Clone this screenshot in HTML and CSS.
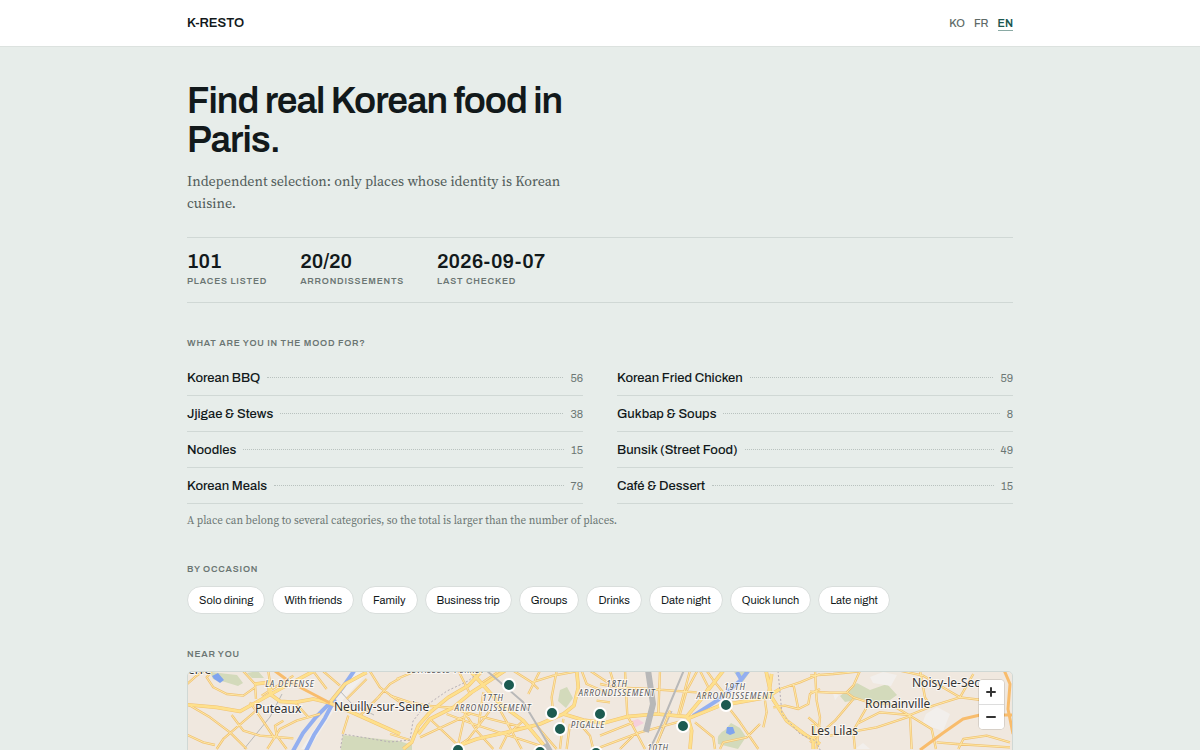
FILE: index.html
```html
<!DOCTYPE html>
<html lang="en">
<head>
<meta charset="utf-8">
<meta name="viewport" content="width=device-width, initial-scale=1">
<title>K-RESTO</title>
<link rel="stylesheet" href="styles.css">
</head>
<body>
<header class="site-header">
  <div class="wrap header-row">
    <a class="brand" href="#">K-RESTO</a>
    <nav class="langs" aria-label="Language">
      <a href="#ko">KO</a>
      <a href="#fr">FR</a>
      <a href="#en" class="active" aria-current="page">EN</a>
    </nav>
  </div>
</header>
<main class="wrap">
  <section class="hero">
    <h1>Find real Korean food in Paris.</h1>
    <p>Independent selection: only places whose identity is Korean cuisine.</p>
  </section>
  <dl class="stats">
    <div><dd>101</dd><dt>PLACES LISTED</dt></div>
    <div><dd>20/20</dd><dt>ARRONDISSEMENTS</dt></div>
    <div><dd>2026-09-07</dd><dt>LAST CHECKED</dt></div>
  </dl>
  <section class="block">
    <h2>WHAT ARE YOU IN THE MOOD FOR?</h2>
    <div class="menu">
      <a href="#bbq"><span>Korean BBQ</span><i></i><b>56</b></a>
      <a href="#chicken"><span>Korean Fried Chicken</span><i></i><b>59</b></a>
      <a href="#stews"><span>Jjigae &amp; Stews</span><i></i><b>38</b></a>
      <a href="#soups"><span>Gukbap &amp; Soups</span><i></i><b>8</b></a>
      <a href="#noodles"><span>Noodles</span><i></i><b>15</b></a>
      <a href="#bunsik"><span>Bunsik (Street Food)</span><i></i><b>49</b></a>
      <a href="#meals"><span>Korean Meals</span><i></i><b>79</b></a>
      <a href="#cafe"><span>Café &amp; Dessert</span><i></i><b>15</b></a>
    </div>
    <p class="note">A place can belong to several categories, so the total is larger than the number of places.</p>
  </section>
  <section class="block">
    <h2>BY OCCASION</h2>
    <div class="chips">
      <a href="#solo">Solo dining</a>
      <a href="#friends">With friends</a>
      <a href="#family">Family</a>
      <a href="#business">Business trip</a>
      <a href="#groups">Groups</a>
      <a href="#drinks">Drinks</a>
      <a href="#date">Date night</a>
      <a href="#lunch">Quick lunch</a>
      <a href="#late">Late night</a>
    </div>
  </section>
  <section class="block">
    <h2>NEAR YOU</h2>
    <div class="map">
      <svg class="map-art" viewBox="188 673 824 320" preserveAspectRatio="xMidYMin slice" role="img" aria-label="Map of Korean restaurants in Paris">
        <defs>
          <g id="minor">
            <g transform="translate(180 640) scale(.3333)">
              <path d="M22 135 L50 110 L70 97 M95 97 L80 115 L100 145 L140 165 L190 170 L225 145 M190 97 L225 135 L228 180 M110 330 L130 300 L240 205 M22 288 L70 310 L105 318 M155 228 L190 275 L240 290 L340 298 M262 330 L300 270 L350 245 L420 225 M320 330 L290 290 L285 260 L310 245 M210 190 L245 240 L285 300 M430 97 L480 140 M400 97 L440 150 M500 180 L560 120 M590 180 L630 135 L660 118 M570 97 L600 145 L660 190 M488 285 L505 230 M265 97 L275 165 M22 195 L90 235 L150 280 L200 330 M345 190 L385 235 M245 170 L340 110 M540 230 L600 170"/>
            </g>
            <g transform="translate(390 665) scale(.3333)">
              <path d="M370 20 L425 55 L445 75 M425 55 L490 35 L560 22 M500 20 L485 100 L490 150 M450 20 L415 90 M0 95 L60 115 L110 125 L190 132 M20 45 L80 20 M190 135 L300 165 L400 190 M220 140 L260 200 L310 255 M300 140 L235 225 L190 255 M320 120 L370 210 L395 255 M120 165 L205 245 M0 210 L60 228 M170 150 L250 180 L450 245 M520 165 L510 255 M540 180 L530 255 M565 175 L600 215 L610 255 M600 20 L660 60 M240 90 L205 20 M280 85 L265 190 M90 220 L240 150 M400 170 L350 215 L330 255 M440 185 L500 255 M620 110 L660 115 M575 20 L590 60 L660 90 M225 150 L205 240 M270 60 L330 20"/>
            </g>
            <g transform="translate(600 665) scale(.3333)">
              <path d="M0 60 L50 70 L150 75 L290 85 M180 20 L175 150 M75 20 L82 155 L135 255 M270 20 L235 150 M292 20 L260 80 L240 150 M0 250 L120 205 L250 170 M60 255 L100 215 M210 140 L165 255 M320 20 L345 55 L390 110 M385 130 L420 175 L475 255 M285 175 L340 220 L345 255 M495 110 L500 145 L490 190 M580 60 L595 135 L555 125 L520 130 M595 135 L625 120 L630 90 L660 75 M480 180 L440 220 L370 235 L360 255 M300 20 L325 70 L300 110 M625 160 L660 190 M540 75 L600 55 L660 30 M30 20 L45 70 M0 215 L100 175"/>
            </g>
            <g transform="translate(810 665) scale(.3333)">
              <path d="M0 35 L70 30 L150 22 M0 83 L60 86 L110 85 L130 65 L150 20 M15 20 L20 110 L30 160 L20 255 M130 105 L75 170 L0 235 M130 200 L170 130 L190 120 L130 100 L110 85 M60 215 L200 190 L300 157 M130 205 L135 255 M140 180 L210 145 L300 153 L370 125 L450 100 L515 108 M300 155 L365 195 L378 255 M300 155 L305 255 M300 155 L240 120 L190 115 M330 20 L345 100 L357 120 M450 100 L490 30 M450 100 L390 65 L340 35 L270 20 M445 255 L460 225 L530 215 L600 235 M380 235 L440 240 L600 250"/>
            </g>
          </g>
          <g id="major">
            <g transform="translate(180 640) scale(.3333)">
              <path d="M22 197 L110 205 L180 217 L225 192 L300 150 L400 97 M225 135 L265 130 L270 165 L300 187 L345 190 L400 180 L450 192 L520 222 L660 285 M450 190 L495 135 L560 100"/>
            </g>
            <g transform="translate(390 665) scale(.3333)">
              <path d="M275 22 L235 65 L175 100 L120 145 L85 185 L65 235 L40 255 M345 20 L245 85 L190 130 L120 165 L85 210 M205 245 L260 225 L350 205 L450 180 L520 150 L552 125 L565 70 L560 20 M520 150 L580 168 L630 175 M240 20 L290 75 L330 120 L400 170 L450 230 L470 255"/>
            </g>
            <g transform="translate(600 665) scale(.3333)">
              <path d="M0 180 L80 158 L170 150 L260 158 L300 110 L370 20 M260 165 L360 125 L500 100 L540 75 M265 165 L275 200 L270 255 M498 20 L515 100 L560 170 L620 215 L660 240 M515 30 L505 100 M640 180 L640 255"/>
            </g>
          </g>
        </defs>
        <rect class="land" x="188" y="673" width="824" height="320"/>
        <g class="green">
          <path d="M210 673 L237 676 L243 684 L238 687 L225 683 L213 680Z M247 674 L258 672 L264 679 L252 679Z"/>
          <path d="M343 736 L399 742 L412 746 V780 H336Z"/>
          <path d="M560 691 L567 688 L573 699 L566 709 L558 702Z"/>
          <path d="M718 745 Q716 735 725 731 L731 724 L740 729 L746 738 L738 750Z M734 673 H750 L742 684Z"/>
          <path d="M840 697 L857 684 L870 691 L887 685 L897 696 L883 706 L862 700 L845 703Z"/>
        </g>
        <g class="pale">
          <path d="M870 678 L883 673 L897 676 L891 687 L873 684Z M926 715 L937 708 L950 715 L943 732 L922 725Z M855 750 L863 744 L870 750Z M833 694 L839 696 L835 701Z"/>
          <path d="M354 673 H368 L334 711 L309 750 H301 L331 706Z"/>
        </g>
        <path class="pink" d="M631 722 L638 720 L644 724 L634 729Z"/>
        <g class="river">
          <path d="M354 672 L343 688 L330 704 L316 718 L303 734 L293 752"/>
          <path d="M335 700 L325 719 L314 736 L306 752"/>
          <path d="M693 717 L718 701 L741 681 L748 672 M737 673 L742 682"/>
        </g>
        <path class="water" d="M212 677 L218 674 L224 681 L220 684 L214 680Z M727 728 L733 728 L735 734 L730 736 L726 734Z"/>
        <path class="rail thin" d="M244 750 L270 718 L282 695 M340 692 L352 705 L374 716 M655 750 L672 712"/>
        <use href="#minor" class="casing"/>
        <use href="#major" class="casing wide"/>
        <use href="#minor" class="road"/>
        <use href="#major" class="road wide"/>
        <g class="motorway">
          <path d="M920 751 L943 734 L963 720 L980 716 H1012 M1004 671 L1010 685 L1008 710 L1013 735"/>
          <path d="M275 672 L290 683 L330 704"/>
        </g>
        <path class="rail" d="M486 671 L523 703 L537 726 L552 752"/>
        <path class="rail broad" d="M648 671 L653 705 L646 733 M545 745 L552 758"/>
        <path class="rail" d="M684 671 L671 702 L659 731 L650 750"/>
        <path class="limit" d="M480 672 L468 682 L447 692 L424 708 L413 722 L410 741 L390 743 L343 735 L340 752 M778 672 L782 715 L800 735 L816 742 L822 755"/>
        <g class="suburb">
          <text x="188" y="675">erre</text>
          <text x="255" y="714">Puteaux</text>
          <text x="334" y="712">Neuilly-sur-Seine</text>
          <text x="912" y="688">Noisy-le-Sec</text>
          <text x="865" y="709">Romainville</text>
          <text x="811" y="736">Les Lilas</text>
        </g>
        <g class="district">
          <text x="290" y="688">LA DÉFENSE</text>
          <text x="446" y="674">LEVALLOIS-PERRET</text>
          <text x="493" y="702">17TH</text><text x="493" y="712">ARRONDISSEMENT</text>
          <text x="617" y="688">18TH</text><text x="617" y="697">ARRONDISSEMENT</text>
          <text x="735" y="691">19TH</text><text x="735" y="700">ARRONDISSEMENT</text>
          <text x="588" y="729">PIGALLE</text>
          <text x="658" y="752">10TH</text>
        </g>
        <g class="pin">
          <circle cx="509" cy="686" r="6"/><circle cx="552" cy="714" r="6"/><circle cx="560" cy="730" r="6"/>
          <circle cx="600" cy="715" r="6"/><circle cx="683" cy="727" r="6"/><circle cx="726" cy="706" r="6"/>
          <circle cx="458" cy="751" r="6"/><circle cx="540" cy="753" r="6"/><circle cx="596" cy="754" r="6"/>
        </g>
      </svg>
      <div class="zoom">
        <button type="button" aria-label="Zoom in"><svg viewBox="0 0 24 24"><path d="M12 8v8M8 12h8"/></svg></button>
        <button type="button" aria-label="Zoom out"><svg viewBox="0 0 24 24"><path d="M8 12h8"/></svg></button>
      </div>
    </div>
  </section>
</main>
</body>
</html>
```
FILE: styles.css
```css
* { box-sizing: border-box; }
body {
  margin: 0;
  background: #e7edea;
  color: #12191b;
  font-family: Archivo, "Liberation Sans", Arial, sans-serif;
  font-optical-sizing: none;
}
a { color: inherit; text-decoration: none; }
h1, h2, p, dl, dd { margin: 0; }
.wrap { width: 100%; max-width: 870px; margin: 0 auto; padding: 0 22px; }

.site-header { background: #fff; border-bottom: 1px solid #dce2df; }
.header-row { display: flex; align-items: center; justify-content: space-between; height: 46px; }
.brand { font-size: 13px; line-height: 20px; font-weight: 600; }
.langs { display: flex; gap: 9px; font-size: 11px; line-height: 14px; font-weight: 500; color: #5e6a67; }
.langs a { border-bottom: 1px solid transparent; }
.langs .active { color: #1c5850; font-weight: 600; border-color: #8aaaa4; }

.hero { padding-top: 35px; max-width: 400px; }
.hero h1 { font-size: 37px; line-height: 39px; font-weight: 600; letter-spacing: -1px; }
.hero p {
  margin-top: 10px;
  font-family: "Source Serif 4", "Liberation Serif", serif;
  font-size: 14px;
  line-height: 22px;
  color: #505b59;
}

.stats {
  display: flex;
  gap: 33px;
  margin-top: 23px;
  padding: 11px 0 14px;
  border-top: 1px solid #d0d8d5;
  border-bottom: 1px solid #d0d8d5;
}
.stats div { display: flex; flex-direction: column; gap: 1px; }
.stats dd { font-size: 20px; line-height: 24px; font-weight: 600; }
.stats dt, h2 {
  font-size: 9px;
  line-height: 14px;
  font-weight: 600;
  letter-spacing: .09em;
  color: #6b7673;
}

.block { margin-top: 33px; }
h2 { margin-bottom: 10px; }
.menu { display: grid; grid-template-columns: 1fr 1fr; column-gap: 34px; }
.menu a {
  display: flex;
  align-items: center;
  gap: 7px;
  height: 36px;
  border-bottom: 1px solid #d0d8d5;
}
.menu span { font-size: 13px; line-height: 18px; font-weight: 500; }
.menu i { flex: 1; border-top: 1px dotted #b9c2bf; }
.menu b { font-size: 11px; line-height: 18px; font-weight: 400; color: #6b7673; }
.note {
  margin-top: 9px;
  font-family: "Source Serif 4", "Liberation Serif", serif;
  font-size: 11px;
  line-height: 16px;
  color: #6b7673;
}

.chips { display: flex; flex-wrap: wrap; gap: 7px; }
.chips a {
  padding: 6px 11px;
  border: 1px solid #d9dedc;
  border-radius: 14px;
  background: #fff;
  font-size: 11px;
  line-height: 14px;
}

.map {
  position: relative;
  height: 320px;
  overflow: hidden;
  border: 1px solid #d0d8d5;
  border-radius: 5px;
}
.map-art { display: block; width: 100%; height: 100%; }
.land { fill: #f0e8df; }
.green { fill: #d3dabb; }
.pale { fill: #f2efec; }
.pink { fill: #f5cfdc; }
.water { fill: #7fa4ee; }
.river { fill: none; stroke: #93aff0; stroke-width: 4; }
.casing, .road, .motorway, .rail, .limit { fill: none; stroke-linejoin: round; }
.casing { stroke: #f0c274; stroke-width: 7; }
.casing.wide { stroke-width: 11; }
.road { stroke: #fee8a6; stroke-width: 3; }
.road.wide { stroke: #fee08c; stroke-width: 8; }
.motorway { stroke: #f8bc6c; stroke-width: 3; }
.rail { stroke: #b8b8b8; stroke-width: 2; }
.rail.thin { stroke-width: 1; }
.rail.broad { stroke-width: 6; }
.limit { stroke: #b5adb3; stroke-width: 1; stroke-dasharray: 2 2; }
.suburb, .district {
  font-family: "Noto Sans", sans-serif;
  stroke: #fff;
  stroke-opacity: .7;
  stroke-width: 2px;
  paint-order: stroke;
}
.suburb { font-size: 12px; fill: #333; }
.district { font-size: 8px; font-style: italic; letter-spacing: .1em; fill: #555; text-anchor: middle; }
.pin { fill: #1c5b51; stroke: #fff; stroke-width: 2px; }

.zoom {
  position: absolute;
  top: 8px;
  right: 8px;
  width: 25px;
  overflow: hidden;
  background: #fff;
  border-radius: 4px;
  box-shadow: 0 0 0 1px rgba(0, 0, 0, .1);
}
.zoom button { display: block; width: 100%; height: 24px; padding: 0; border: 0; background: #fff; }
.zoom button + button { height: 25px; border-top: 1px solid #ddd; }
.zoom svg { display: block; width: 24px; height: 24px; fill: none; stroke: #333; stroke-width: 2; stroke-linecap: round; }
```
